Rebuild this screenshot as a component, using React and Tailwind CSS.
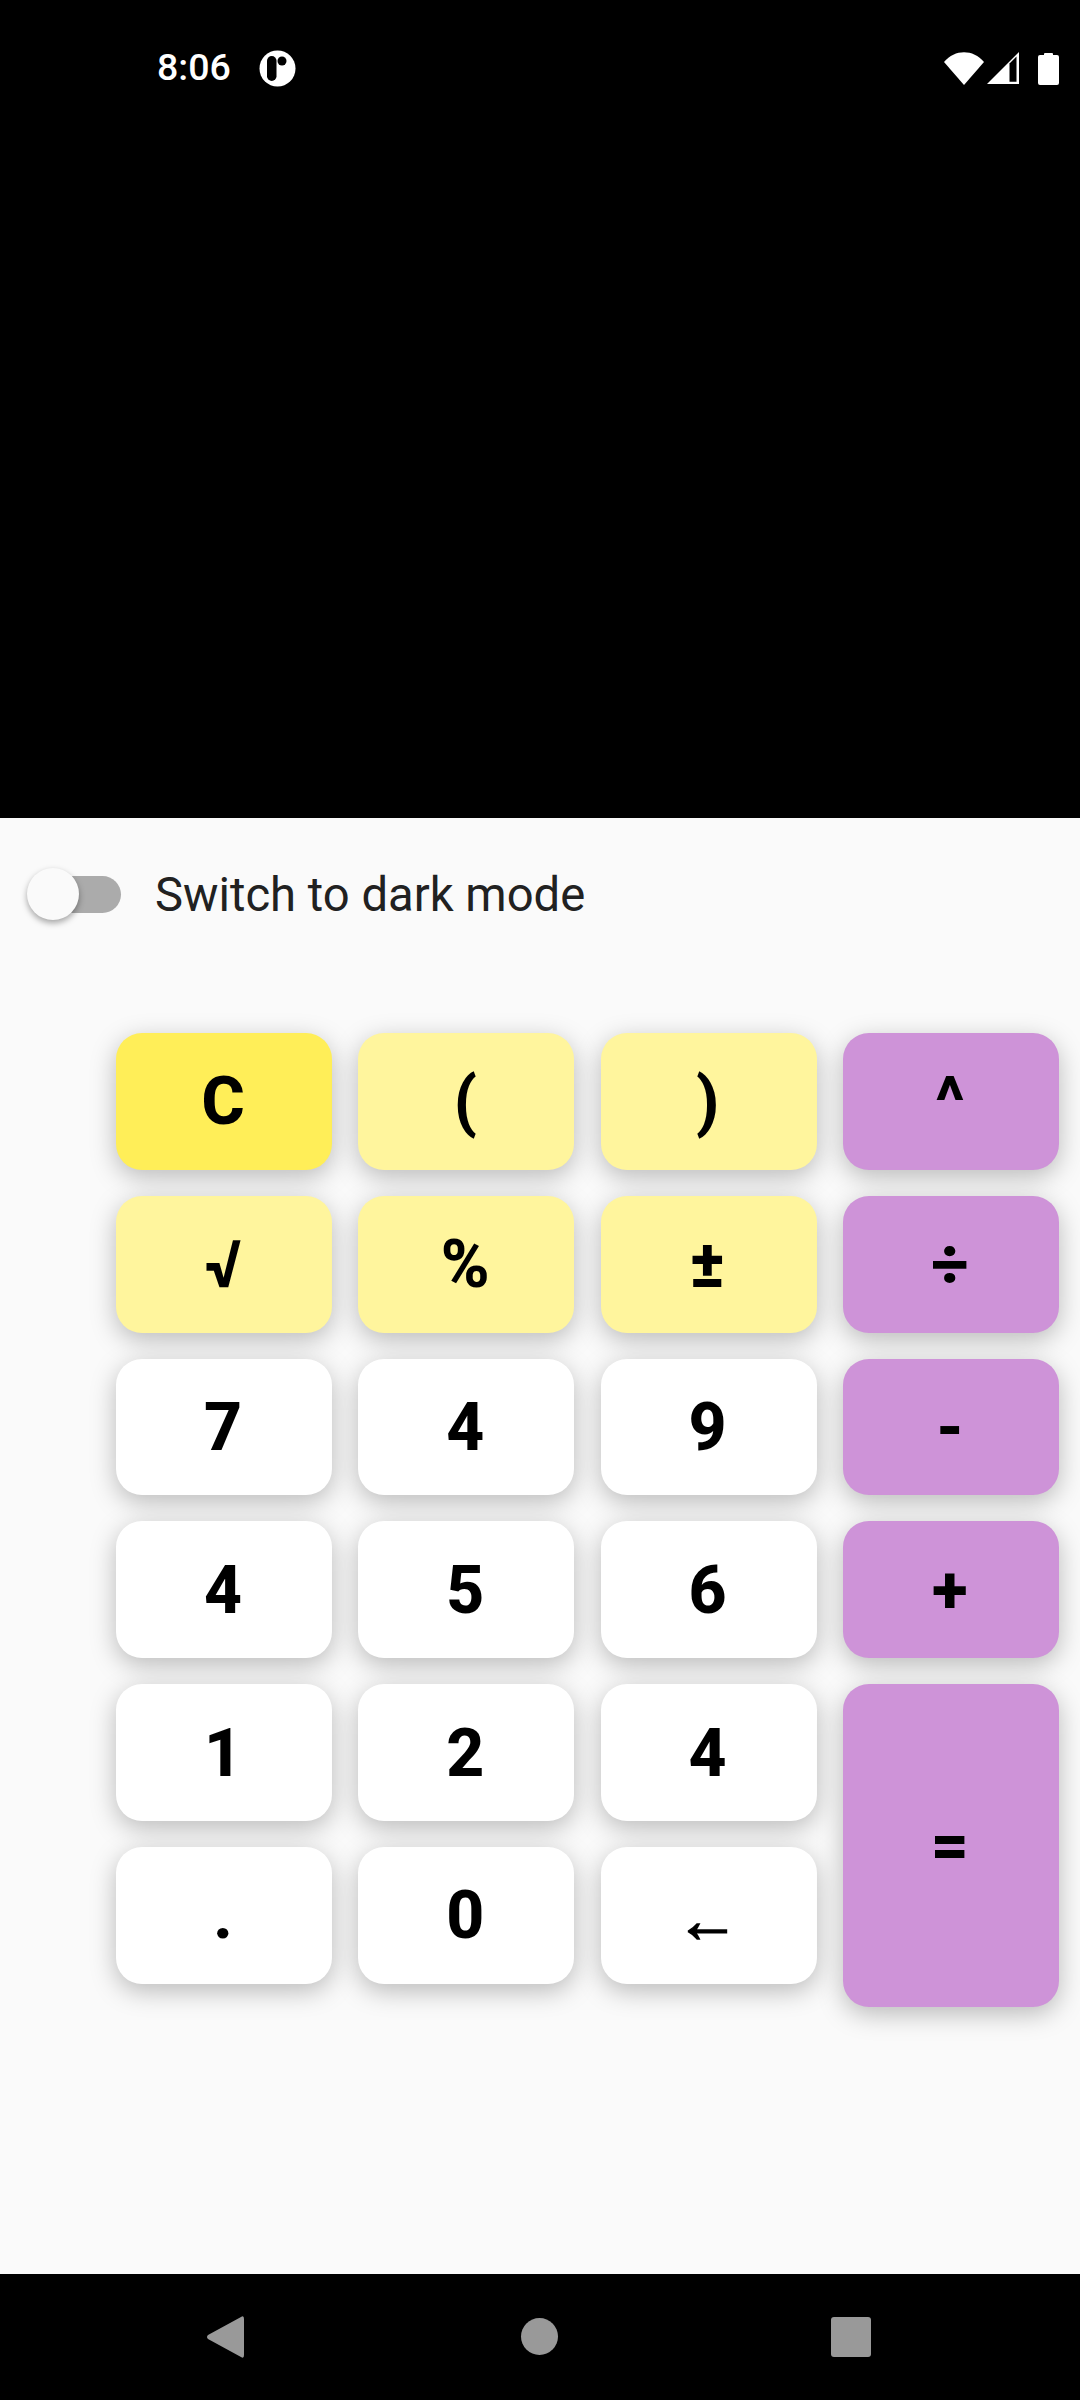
const Key = ({ label, bg = "bg-white", tall = false }) => (
  <button className={`${bg} ${tall ? "h-[322.6px]" : "h-[136.8px]"} w-[216px] rounded-[26px] flex items-center justify-center pt-[2px] pr-[2px] text-black text-[66px] font-extrabold leading-none shadow-[0_7px_26px_rgba(0,0,0,0.26)]`}>
    {label}
  </button>
);

const lightY = "bg-[#fff59d]";
const purple = "bg-[#ce93d8]";

const arrow = <span className="font-['Liberation_Sans',sans-serif] font-bold text-[64px] mt-[8px] [-webkit-text-stroke:1.5px_black]">←</span>;

const columns = [
  [["C", "bg-[#ffee58]"], ["√", lightY], ["7"], ["4"], ["1"], ["."]],
  [["(", lightY], ["%", lightY], ["4"], ["5"], ["2"], ["0"]],
  [[")", lightY], ["±", lightY], ["9"], ["6"], ["4"], [arrow]],
];
const ops = ["^", "÷", "-", "+"];

export default function App() {
  return (
    <div className="w-[1080px] h-[2400px] flex flex-col bg-[#fafafa] overflow-hidden font-['Roboto',sans-serif]">
      <div className="h-[818px] bg-black shrink-0 flex items-start">
        <div className="w-full h-[68px] mt-[34px] flex items-center pl-[157px] pr-[21px] text-white">
          <span className="text-[37.5px] font-medium leading-none">8:06</span>
          <svg className="ml-[28px]" width="37" height="37" viewBox="0 0 37 37">
            <circle cx="18.5" cy="18.5" r="18" fill="#fff" />
            <rect x="8" y="6" width="9.5" height="25" rx="4.75" fill="#000" />
            <circle cx="23" cy="11" r="4.5" fill="#000" />
          </svg>
          <div className="ml-auto flex items-center">
            <svg width="40" height="33" viewBox="0 0 40 33">
              <path d="M0 10 C11 -3 29 -3 40 10 L20 33 Z" fill="#fff" />
            </svg>
            <svg className="ml-[3px]" width="32" height="32" viewBox="0 0 32 32">
              <path d="M0 32 L32 0 V32 Z" fill="#fff" />
              <path d="M22.5 11.5 L29.5 4.5 V29.8 H22.5 Z" fill="#000" />
            </svg>
            <svg className="ml-[19px]" width="21" height="33" viewBox="0 0 21 33">
              <path d="M6 3 V2 a1 1 0 0 1 1 -1 h7 a1 1 0 0 1 1 1 v1 h4 a2 2 0 0 1 2 2 v26 a2 2 0 0 1 -2 2 h-17 a2 2 0 0 1 -2 -2 v-26 a2 2 0 0 1 2 -2 Z" fill="#fff" />
            </svg>
          </div>
        </div>
      </div>

      <div className="flex items-center h-[152px] shrink-0 pl-[27px]">
        <div className="relative w-[94px] h-[52px] flex items-center">
          <div className="absolute left-[5px] w-[89px] h-[37px] rounded-full bg-[#ababab]" />
          <div className="absolute left-0 w-[52px] h-[52px] rounded-full bg-[#fafafa] shadow-[0_3px_6px_rgba(0,0,0,0.35)]" />
        </div>
        <span className="ml-[34px] mt-[4px] text-[47.2px] leading-none text-[#212121]">Switch to dark mode</span>
      </div>

      <div className="flex gap-[26.3px] pl-[116px] pt-[63px] flex-1 items-start">
        {columns.map((col, i) => (
          <div key={i} className="flex flex-col gap-[26px]">
            {col.map(([label, bg], j) => (
              <Key key={j} label={label} bg={bg} />
            ))}
          </div>
        ))}
        <div className="flex flex-col gap-[26px]">
          {ops.map((o) => (
            <Key key={o} label={o} bg={purple} />
          ))}
          <Key label="=" bg={purple} tall />
        </div>
      </div>

      <div className="h-[126px] bg-black shrink-0 flex items-center pl-[207px] pb-[1px]">
        <svg width="37" height="42" viewBox="0 0 37 42">
          <path d="M34 1 Q37 -1 37 3 V39 Q37 43 34 41 L1 23 Q-1 21 1 19 Z" fill="#999" />
        </svg>
        <div className="ml-[277px] w-[37px] h-[37px] rounded-full bg-[#999]" />
        <div className="ml-[273px] w-[40px] h-[40px] rounded-[3px] bg-[#999]" />
      </div>
    </div>
  );
}
